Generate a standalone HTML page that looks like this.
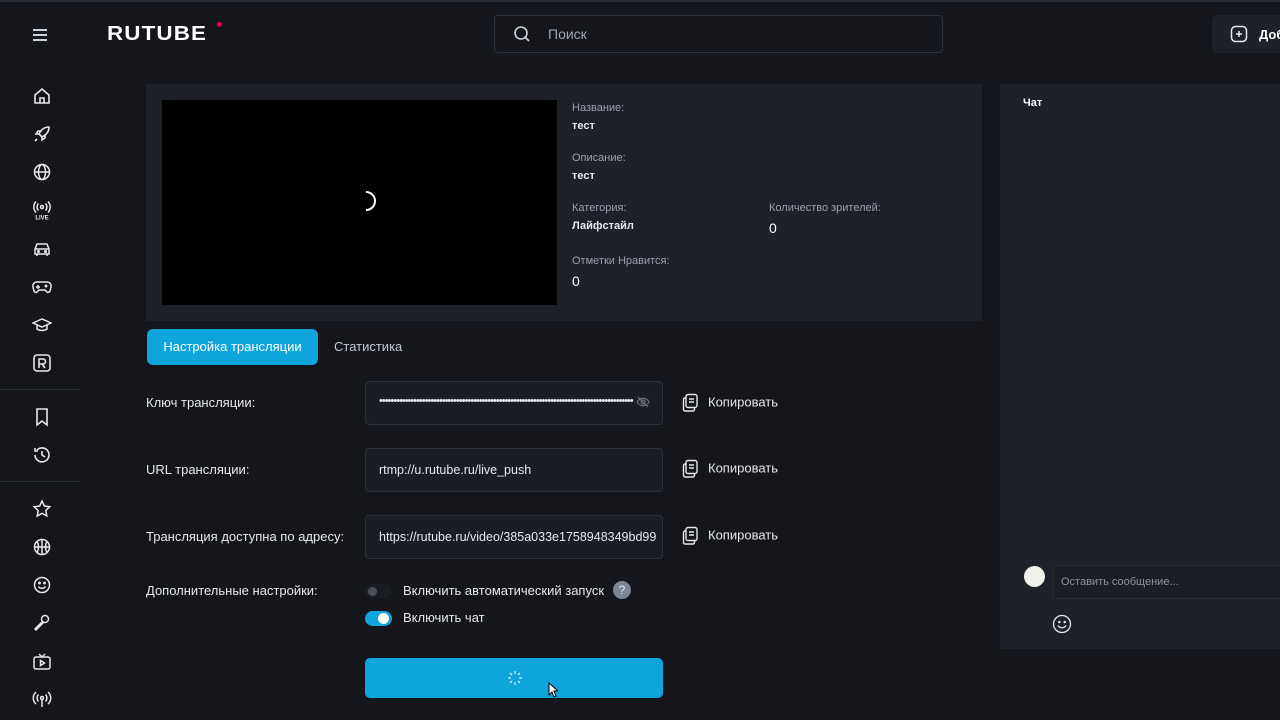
<!DOCTYPE html>
<html><head><meta charset="utf-8"><style>
*{box-sizing:border-box;margin:0;padding:0}
body{width:1280px;height:720px;overflow:hidden;background:#14161b;font-family:"Liberation Sans",sans-serif;color:#fff;position:relative}
.a{position:absolute}
.ic{position:absolute;left:32px;width:20px;height:20px}
.lbl{font-size:13px;color:#e6e8ec}
.inp{position:absolute;left:365px;width:298px;height:44px;border:1px solid #2c303a;border-radius:4px;background:#1a1d23;font-size:12.5px;color:#e6e8ec;padding:14px 13px;white-space:nowrap;overflow:hidden}
.cp{position:absolute;left:682px;font-size:13px;color:#e6e8ec}
.cp svg{vertical-align:middle;margin-right:8px}
.sm{font-size:11px;color:#9aa0ab}
.bv{font-size:11px;font-weight:bold;color:#e6e8ec}
</style></head><body>
<div class="a" style="left:0;top:0;width:1280px;height:2px;background:#2a2d33"></div>
<div class="a" style="left:33px;top:29px;width:14px;height:1.5px;background:#cfd2d8;box-shadow:0 5px 0 #cfd2d8,0 10px 0 #cfd2d8"></div>
<div class="a" style="left:107px;top:23px;font-size:20px;font-weight:bold;letter-spacing:1px;color:#fff;transform:scaleX(1.12);transform-origin:left top;line-height:22px">RUTUBE</div>
<div class="a" style="left:217px;top:22px;width:5px;height:5px;border-radius:50%;background:#e6004e"></div>
<div class="a" style="left:494px;top:15px;width:449px;height:38px;border:1px solid #2c303a;border-radius:4px;background:#14161b"></div>
<svg class="a" style="left:513px;top:25px" width="18" height="18" viewBox="0 0 18 18" fill="none" stroke="#cfd2d8" stroke-width="1.6"><circle cx="8" cy="8" r="6"/><path d="M12.5 12.5L16 16"/></svg>
<div class="a" style="left:548px;top:26px;font-size:14px;color:#a0a5ae">Поиск</div>
<div class="a" style="left:1212px;top:15px;width:100px;height:38px;border-radius:6px;background:#1e2129"></div>
<svg class="a" style="left:1230px;top:25px" width="18" height="18" viewBox="0 0 18 18" fill="none" stroke="#e6e8ec" stroke-width="1.5"><rect x="1.5" y="1.5" width="15" height="15" rx="4"/><path d="M9 6v6M6 9h6"/></svg>
<div class="a" style="left:1259px;top:27px;font-size:13px;font-weight:bold">Доб</div>
<svg class="ic" style="top:86px" viewBox="0 0 20 20" fill="none" stroke="#e6e8ec" stroke-width="1.6"><path d="M3 9L10 3l7 6v8H3z M8 17v-5h4v5"/></svg>
<svg class="ic" style="top:124px" viewBox="0 0 20 20" fill="none" stroke="#e6e8ec" stroke-width="1.6"><path d="M17 3c-5 0-8 3-10 7l3 3c4-2 7-5 7-10zM7 10H4l2-3h3M10 13v3l3-2v-3M5 15l-2 2"/></svg>
<svg class="ic" style="top:162px" viewBox="0 0 20 20" fill="none" stroke="#e6e8ec" stroke-width="1.5"><circle cx="10" cy="10" r="7.5"/><ellipse cx="10" cy="10" rx="3.5" ry="7.5"/><path d="M2.5 10h15"/></svg>
<svg class="ic" style="top:200px" viewBox="0 0 20 20" fill="none" stroke="#e6e8ec" stroke-width="1.5"><circle cx="10" cy="7" r="1.5"/><path d="M6.5 3.5a5 5 0 000 7M13.5 3.5a5 5 0 010 7M4 1.5a8 8 0 000 11M16 1.5a8 8 0 010 11"/><text x="10" y="19.5" font-size="6" font-weight="bold" fill="#e6e8ec" stroke="none" text-anchor="middle" font-family="Liberation Sans">LIVE</text></svg>
<svg class="ic" style="top:239px" viewBox="0 0 20 20" fill="none" stroke="#e6e8ec" stroke-width="1.5"><path d="M3 10l2-5h10l2 5v5H3zM3 10h14M5 15v2M15 15v2"/><circle cx="6.5" cy="12.5" r=".8"/><circle cx="13.5" cy="12.5" r=".8"/></svg>
<svg class="ic" style="top:277px" viewBox="0 0 20 20" fill="none" stroke="#e6e8ec" stroke-width="1.5"><path d="M5 5h10a4 4 0 014 5l-1 4a2 2 0 01-3 1l-2-2H7l-2 2a2 2 0 01-3-1l-1-4a4 4 0 014-5zM6 8v4M4 10h4"/><circle cx="14" cy="9" r=".7"/></svg>
<svg class="ic" style="top:315px" viewBox="0 0 20 20" fill="none" stroke="#e6e8ec" stroke-width="1.5"><path d="M1 8l9-4 9 4-9 4zM5 10v4c3 2 7 2 10 0v-4"/></svg>
<svg class="ic" style="top:353px" viewBox="0 0 20 20" fill="none" stroke="#e6e8ec" stroke-width="1.6"><rect x="2" y="2" width="16" height="16" rx="3"/><path d="M7 15V6h4a2.5 2.5 0 010 5H7M10 11l3 4"/></svg>
<div class="a" style="left:0;top:389px;width:80px;height:1px;background:#2a2d33"></div>
<svg class="ic" style="top:407px" viewBox="0 0 20 20" fill="none" stroke="#e6e8ec" stroke-width="1.6"><path d="M5 2h10v16l-5-4-5 4z"/></svg>
<svg class="ic" style="top:445px" viewBox="0 0 20 20" fill="none" stroke="#e6e8ec" stroke-width="1.6"><path d="M3 10a7 7 0 102-5M3 3v3h3M10 6v4l3 2"/></svg>
<div class="a" style="left:0;top:481px;width:80px;height:1px;background:#2a2d33"></div>
<svg class="ic" style="top:499px" viewBox="0 0 20 20" fill="none" stroke="#e6e8ec" stroke-width="1.5"><path d="M10 2l2.4 5 5.4.7-4 3.8 1 5.4L10 14.3 5.2 17l1-5.4-4-3.8 5.4-.7z"/></svg>
<svg class="ic" style="top:537px" viewBox="0 0 20 20" fill="none" stroke="#e6e8ec" stroke-width="1.5"><circle cx="10" cy="10" r="7.5"/><path d="M10 2.5v15M2.5 10h15M5 4.5c2 3 2 8 0 11M15 4.5c-2 3-2 8 0 11"/></svg>
<svg class="ic" style="top:575px" viewBox="0 0 20 20" fill="none" stroke="#e6e8ec" stroke-width="1.5"><circle cx="10" cy="10" r="7.5"/><path d="M6.5 11.5c1.5 2.5 5.5 2.5 7 0"/><circle cx="7.5" cy="8" r=".7"/><circle cx="12.5" cy="8" r=".7"/></svg>
<svg class="ic" style="top:613px" viewBox="0 0 20 20" fill="none" stroke="#e6e8ec" stroke-width="1.5"><circle cx="13" cy="6" r="3.5"/><path d="M10.5 8.5L3 16l1 1 7.5-7.5"/></svg>
<svg class="ic" style="top:652px" viewBox="0 0 20 20" fill="none" stroke="#e6e8ec" stroke-width="1.5"><rect x="2" y="5" width="16" height="12" rx="2"/><path d="M7 2l3 3 3-3M8.5 8.5v5l4-2.5z"/></svg>
<svg class="ic" style="top:689px" viewBox="0 0 20 20" fill="none" stroke="#e6e8ec" stroke-width="1.5"><circle cx="10" cy="9" r="1.5"/><path d="M10 10.5V18M6.5 5.5a5 5 0 000 7M13.5 5.5a5 5 0 010 7M4 3a8 8 0 000 12M16 3a8 8 0 010 12"/></svg>
<div class="a" style="left:146px;top:84px;width:836px;height:237px;background:#1e2129;border-radius:2px"></div>
<div class="a" style="left:162px;top:100px;width:395px;height:205px;background:#000"></div>
<svg class="a" style="left:358px;top:190px" width="20" height="22" viewBox="0 0 20 22" fill="none" stroke="#fff" stroke-width="2"><path d="M8 2a9 9 0 010 18"/></svg>
<div class="a sm" style="left:572px;top:102px">Название:</div>
<div class="a bv" style="left:572px;top:120px">тест</div>
<div class="a sm" style="left:572px;top:152px">Описание:</div>
<div class="a bv" style="left:572px;top:170px">тест</div>
<div class="a sm" style="left:572px;top:202px">Категория:</div>
<div class="a bv" style="left:572px;top:220px">Лайфстайл</div>
<div class="a sm" style="left:769px;top:202px">Количество зрителей:</div>
<div class="a" style="left:769px;top:220px;font-size:14px">0</div>
<div class="a sm" style="left:572px;top:255px">Отметки Нравится:</div>
<div class="a" style="left:572px;top:273px;font-size:14px">0</div>
<div class="a" style="left:147px;top:329px;width:171px;height:36px;background:#0ea5dd;border-radius:6px;font-size:13px;text-align:center;line-height:36px">Настройка трансляции</div>
<div class="a" style="left:334px;top:339px;font-size:13px;color:#c5c9d0">Статистика</div>
<div class="a lbl" style="left:146px;top:395px">Ключ трансляции:</div>
<div class="inp" style="top:381px;letter-spacing:-1px;font-size:11px;padding-top:13px">•••••••••••••••••••••••••••••••••••••••••••••••••••••••••••••••••••••••••••••••••••••••••</div>
<svg class="a" style="left:636px;top:396px" width="14" height="12" viewBox="0 0 14 12" fill="none" stroke="#6b707a" stroke-width="1.2"><path d="M1 6c3-5 9-5 12 0-3 5-9 5-12 0z M2 1l10 10"/><circle cx="7" cy="6" r="2"/></svg>
<div class="cp" style="top:393px"><svg width="18" height="20" viewBox="0 0 18 20" fill="none" stroke="#e6e8ec" stroke-width="1.4"><rect x="4" y="1.5" width="11" height="13" rx="2"/><path d="M4 5H3a1.5 1.5 0 00-1.5 1.5v10A1.5 1.5 0 003 18h8a1.5 1.5 0 001.5-1.5v-2M7 6h5M7 9h5"/></svg>Копировать</div>
<div class="a lbl" style="left:146px;top:462px">URL трансляции:</div>
<div class="inp" style="top:448px">rtmp://u.rutube.ru/live_push</div>
<div class="cp" style="top:459px"><svg width="18" height="20" viewBox="0 0 18 20" fill="none" stroke="#e6e8ec" stroke-width="1.4"><rect x="4" y="1.5" width="11" height="13" rx="2"/><path d="M4 5H3a1.5 1.5 0 00-1.5 1.5v10A1.5 1.5 0 003 18h8a1.5 1.5 0 001.5-1.5v-2M7 6h5M7 9h5"/></svg>Копировать</div>
<div class="a lbl" style="left:146px;top:529px">Трансляция доступна по адресу:</div>
<div class="inp" style="top:515px">https://rutube.ru/video/385a033e1758948349bd99</div>
<div class="cp" style="top:526px"><svg width="18" height="20" viewBox="0 0 18 20" fill="none" stroke="#e6e8ec" stroke-width="1.4"><rect x="4" y="1.5" width="11" height="13" rx="2"/><path d="M4 5H3a1.5 1.5 0 00-1.5 1.5v10A1.5 1.5 0 003 18h8a1.5 1.5 0 001.5-1.5v-2M7 6h5M7 9h5"/></svg>Копировать</div>
<div class="a lbl" style="left:146px;top:583px">Дополнительные настройки:</div>
<div class="a" style="left:365px;top:584px;width:26px;height:14px;border-radius:7px;background:#1a1d22"></div>
<div class="a" style="left:368px;top:587px;width:9px;height:9px;border-radius:50%;background:#4a4e56"></div>
<div class="a lbl" style="left:403px;top:583px">Включить автоматический запуск</div>
<div class="a" style="left:613px;top:581px;width:18px;height:18px;border-radius:50%;background:#7b8594;font-size:12px;text-align:center;line-height:18px;color:#e6e8ec">?</div>
<div class="a" style="left:365px;top:611px;width:27px;height:15px;border-radius:8px;background:#0ea5dd"></div>
<div class="a" style="left:378px;top:613px;width:11px;height:11px;border-radius:50%;background:#fff"></div>
<div class="a lbl" style="left:403px;top:610px">Включить чат</div>
<div class="a" style="left:365px;top:658px;width:298px;height:40px;border-radius:5px;background:#0ea5dd"></div>
<svg class="a" style="left:507px;top:670px" width="16" height="16" viewBox="0 0 16 16" stroke="#cdeefb" stroke-width="1.3"><path d="M8 1v3M8 12v3M1 8h3M12 8h3M3 3l2 2M11 11l2 2M13 3l-2 2M3 13l2-2"/></svg>
<svg class="a" style="left:548px;top:682px" width="10" height="16" viewBox="0 0 10 16"><path d="M1 1v12l3-3 2 5 2-1-2-5h4z" fill="#fff" stroke="#000" stroke-width="1"/></svg>
<div class="a" style="left:1000px;top:84px;width:280px;height:565px;background:#1e2129"></div>
<div class="a" style="left:1023px;top:97px;font-size:11px;font-weight:bold">Чат</div>
<div class="a" style="left:1024px;top:566px;width:21px;height:21px;border-radius:50%;background:#f2f0ea"></div>
<div class="a" style="left:1053px;top:565px;width:240px;height:34px;border:1px solid #262a33;background:#1b1e25;border-radius:3px;font-size:11px;color:#8d929c;padding:10px 7px">Оставить сообщение...</div>
<svg class="a" style="left:1052px;top:614px" width="20" height="20" viewBox="0 0 20 20" fill="none" stroke="#e6e8ec" stroke-width="1.3"><circle cx="10" cy="10" r="8.5"/><path d="M6 11.5c1.8 3 6.2 3 8 0"/><circle cx="7.3" cy="8" r=".6"/><circle cx="12.7" cy="8" r=".6"/></svg>
</body></html>
